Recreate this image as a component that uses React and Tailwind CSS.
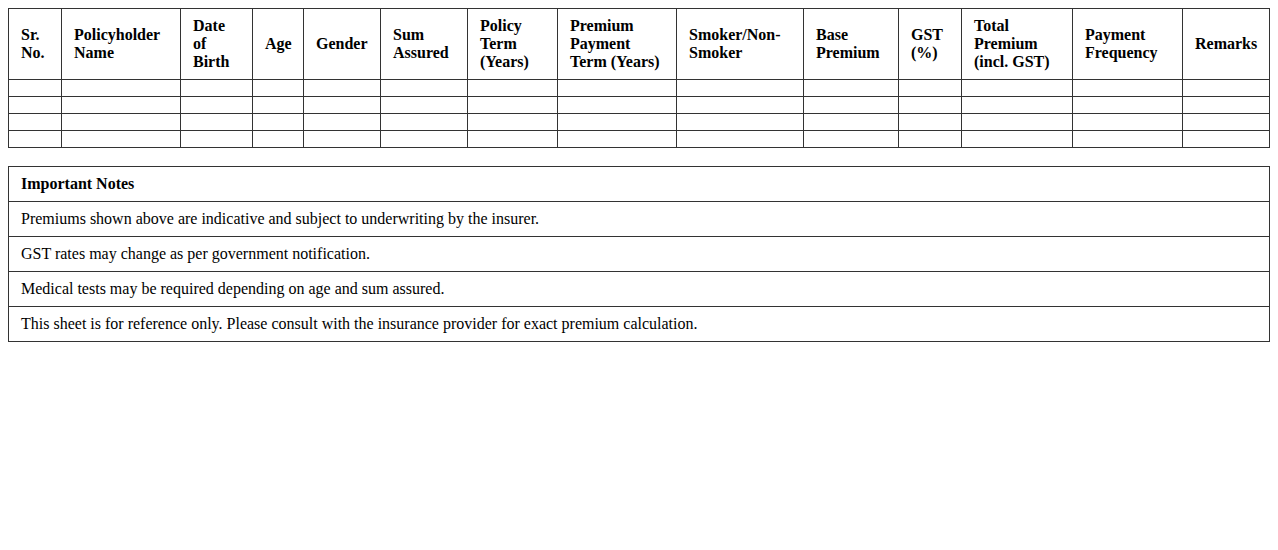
import React from "react";

const headers = [
  ["Sr.", "No."],
  ["Policyholder", "Name"],
  ["Date", "of", "Birth"],
  ["Age"],
  ["Gender"],
  ["Sum", "Assured"],
  ["Policy", "Term", "(Years)"],
  ["Premium", "Payment", "Term (Years)"],
  ["Smoker/Non-", "Smoker"],
  ["Base", "Premium"],
  ["GST", "(%)"],
  ["Total", "Premium", "(incl. GST)"],
  ["Payment", "Frequency"],
  ["Remarks"],
];

const widths = [53, 119, 72, 51, 77, 87, 90, 119, 127, 95, 63, 111, 110, 87];

const notes = [
  "Premiums shown above are indicative and subject to underwriting by the insurer.",
  "GST rates may change as per government notification.",
  "Medical tests may be required depending on age and sum assured.",
  "This sheet is for reference only. Please consult with the insurance provider for exact premium calculation.",
];

export default function App() {
  return (
    <div
      className="bg-white text-black p-2 min-h-[550px] text-[16px]"
      style={{ fontFamily: '"Liberation Serif", "Times New Roman", serif' }}
    >
      <table className="w-full table-fixed border-collapse border border-[#333]">
        <colgroup>
          {widths.map((w, i) => (
            <col key={i} style={{ width: w }} />
          ))}
        </colgroup>
        <thead>
          <tr>
            {headers.map((h, i) => (
              <th
                key={i}
                className="border border-[#333] px-3 py-2 text-left align-middle font-bold leading-[18px]"
              >
                {h.map((line, j) => (
                  <div key={j} className="whitespace-nowrap">{line}</div>
                ))}
              </th>
            ))}
          </tr>
        </thead>
        <tbody>
          {[0, 1, 2, 3].map((r) => (
            <tr key={r}>
              {headers.map((_, i) => (
                <td key={i} className="border border-[#333] px-3 py-2 h-[17px]"></td>
              ))}
            </tr>
          ))}
        </tbody>
      </table>

      <table className="w-full border-collapse border border-[#333] mt-[18px]">
        <tbody>
          <tr>
            <td className="border border-[#333] px-3 py-2 font-bold leading-[18px]">
              Important Notes
            </td>
          </tr>
          {notes.map((n, i) => (
            <tr key={i}>
              <td className="border border-[#333] px-3 py-2 leading-[18px]">{n}</td>
            </tr>
          ))}
        </tbody>
      </table>
    </div>
  );
}
